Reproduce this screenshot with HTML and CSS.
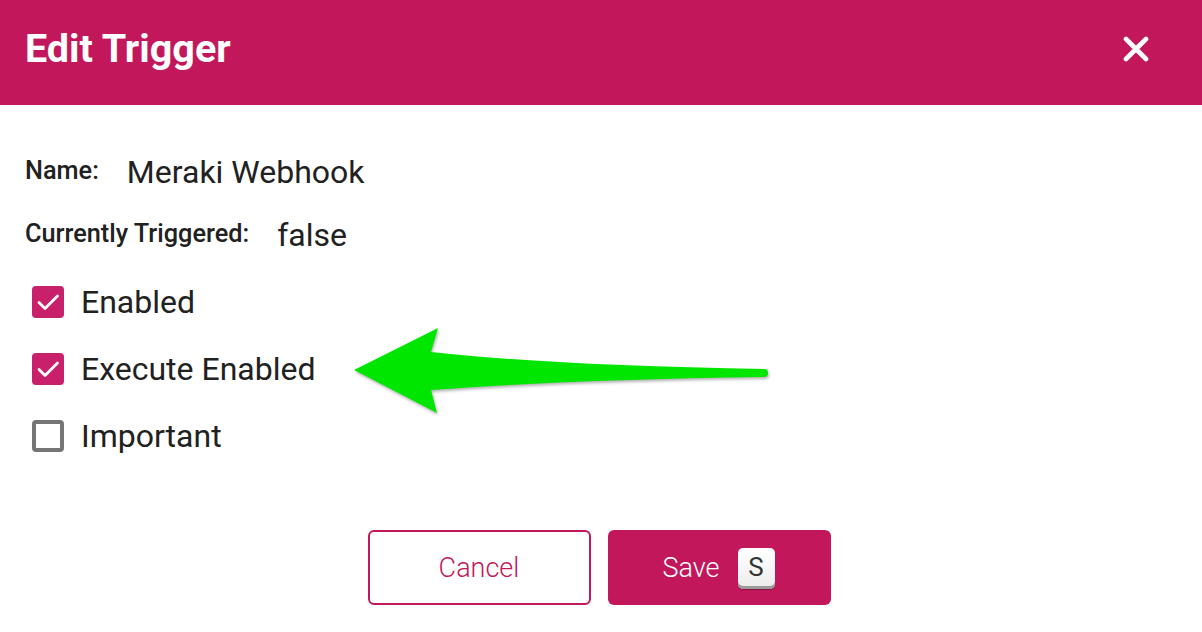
FILE: index.html
```html
<!DOCTYPE html>
<html>
<head>
<meta charset="utf-8">
<link rel="stylesheet" href="styles.css">
</head>
<body>
<div class="dialog">
  <header class="header">
    <h1 class="title">Edit Trigger</h1>
    <button class="close" aria-label="Close">
      <svg width="26" height="26" viewBox="0 0 26 26"><path d="M3 3L23 23M23 3L3 23" stroke="#fff" stroke-width="4.6" stroke-linecap="round"/></svg>
    </button>
  </header>
  <main class="content">
    <div class="field">
      <span class="label">Name:</span>
      <span class="value">Meraki Webhook</span>
    </div>
    <div class="field field-second">
      <span class="label">Currently Triggered:</span>
      <span class="value">false</span>
    </div>
    <label class="check first">
      <span class="box checked"><svg width="32" height="32" viewBox="0 0 32 32"><path d="M7 16.5L13 22.5L25.5 10" fill="none" stroke="#fff" stroke-width="2.8" stroke-linecap="round" stroke-linejoin="round"/></svg></span>
      <span class="check-label">Enabled</span>
    </label>
    <label class="check">
      <span class="box checked"><svg width="32" height="32" viewBox="0 0 32 32"><path d="M7 16.5L13 22.5L25.5 10" fill="none" stroke="#fff" stroke-width="2.8" stroke-linecap="round" stroke-linejoin="round"/></svg></span>
      <span class="check-label">Execute Enabled</span>
    </label>
    <label class="check">
      <span class="box"></span>
      <span class="check-label">Important</span>
    </label>
    <div class="actions">
      <button class="btn btn-outline">Cancel</button>
      <button class="btn btn-fill">Save <span class="key">S</span></button>
    </div>
    <svg class="arrow" width="440" height="100" viewBox="340 320 440 100">
      <path d="M354 370 L438 328 L431 352 Q560 366 764 369 A4 4 0 0 1 764 377 Q560 380 431 390 L437 413 Z" fill="#00e600"/>
    </svg>
  </main>
</div>
</body>
</html>
```

FILE: styles.css
```css
* { box-sizing: border-box; }
html, body {
  margin: 0;
  padding: 0;
  background: #fff;
  font-family: Roboto, "Liberation Sans", sans-serif;
  color: #212121;
}
.dialog {
  width: 1202px;
  height: 632px;
  position: relative;
  overflow: hidden;
}
.header {
  height: 105px;
  background: #c2185b;
  display: flex;
  align-items: center;
  justify-content: space-between;
  padding: 0 53px 8px 25px;
}
.title {
  margin: 0;
  font-size: 39.5px;
  font-weight: 700;
  color: #fff;
}
.close {
  background: none;
  border: 0;
  padding: 0;
  width: 26px;
  height: 26px;
  display: flex;
}
.content {
  padding: 45px 25px 0;
  position: relative;
}
.field {
  display: flex;
  align-items: center;
  gap: 28px;
  height: 40px;
}
.field-second {
  margin-top: 23px;
}
.label {
  font-size: 25.3px;
  font-weight: 500;
}
.value {
  font-size: 32px;
  padding-top: 4px;
}
.check {
  display: flex;
  align-items: center;
  gap: 17px;
  height: 44px;
  margin-top: 23px;
  padding-left: 7px;
  font-size: 32px;
}
.check.first {
  margin-top: 27px;
}
.box {
  width: 32px;
  height: 32px;
  border: 4px solid #767676;
  border-radius: 4px;
  flex: none;
  display: flex;
}
.box.checked {
  border: 0;
  background: #c8206a;
}
.actions {
  display: flex;
  justify-content: center;
  gap: 17px;
  margin-top: 72px;
  padding-right: 4px;
}
.btn {
  width: 223px;
  height: 75px;
  border-radius: 6px;
  font-family: Roboto, "Liberation Sans", sans-serif;
  font-size: 27px;
  font-weight: 300;
  display: flex;
  align-items: center;
  justify-content: center;
}
.btn-outline {
  background: #fff;
  border: 2px solid #c2185b;
  color: #c2185b;
}
.btn-fill {
  background: #c2185b;
  border: 0;
  color: #fff;
  gap: 18px;
  padding-left: 5px;
}
.key {
  width: 37px;
  height: 41px;
  border-radius: 5px;
  background: linear-gradient(#ffffff, #ececec);
  box-shadow: inset 0 -3px 0 #9a9a9a, 0 1px 1px rgba(0,0,0,0.3);
  color: #333;
  font-size: 26px;
  font-weight: 400;
  display: flex;
  align-items: center;
  justify-content: center;
  padding-bottom: 4px;
  margin-top: 2px;
}
.arrow {
  position: absolute;
  left: 340px;
  top: 215px;
  filter: drop-shadow(1px 2px 1.5px rgba(0,0,0,0.3));
}
```
